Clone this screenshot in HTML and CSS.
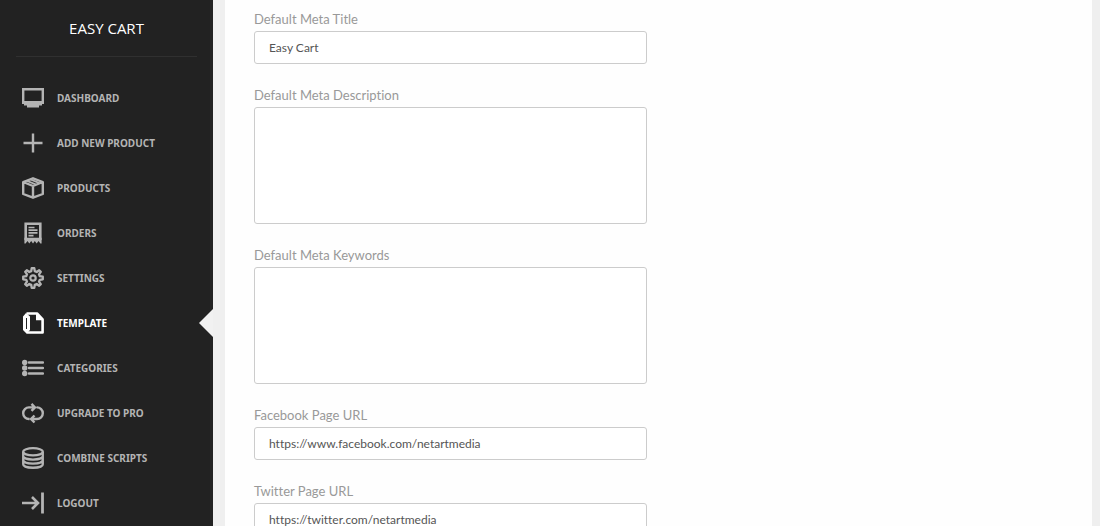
FILE: index.html
```html
<!DOCTYPE html>
<html lang="en">
<head>
  <meta charset="UTF-8">
  <meta name="viewport" content="width=device-width, initial-scale=1.0">
  <title>Easy Cart</title>
  <link rel="stylesheet" href="styles.css">
</head>
<body>
  <div class="wrapper">
    <aside class="sidebar">
      <div class="logo"><a href="#">EASY CART</a></div>
      <nav class="menu">
        <a class="menu-item" href="#">
          <svg class="icon" viewBox="0 0 22 22"><path fill="none" stroke="currentColor" stroke-width="2.400" d="M1.200 2.200h19.600v13H1.200z"/><path fill="currentColor" d="M0 14h22v3H0zM2 17h18v1.500H2zM5 18h12v2.500H5z"/></svg>
          <span>DASHBOARD</span>
        </a>
        <a class="menu-item" href="#">
          <svg class="icon" viewBox="0 0 22 22"><path fill="none" stroke="currentColor" stroke-width="2.400" d="M11 1.500v19M1.500 11h19"/></svg>
          <span>ADD NEW PRODUCT</span>
        </a>
        <a class="menu-item" href="#">
          <svg class="icon" viewBox="0 0 22 22"><path fill="none" stroke="currentColor" stroke-width="2.400" stroke-linejoin="round" d="M11 1.300L20.800 5v12L11 20.700 1.200 17V5zM1.200 5L11 9l9.800-4M11 9v12"/><path fill="none" stroke="currentColor" stroke-width="1.800" d="M5 3.800l9 3.700M8.500 2.500l9 3.700"/></svg>
          <span>PRODUCTS</span>
        </a>
        <a class="menu-item" href="#">
          <svg class="icon" viewBox="0 0 22 22"><path fill="none" stroke="currentColor" stroke-width="2.600" d="M3.700 18V1.700h14.600V18"/><path fill="currentColor" d="M2.400 15.800h17.200v5.700h-1.200L16.500 19l-1.800 2.500L12.800 19 11 21.500 9.200 19l-1.900 2.500L5.500 19l-1.900 2.500H2.400z"/><path stroke="currentColor" stroke-width="1.700" d="M6.500 5.500h6M6.500 8.200h9M6.500 10.900h9M6.500 13.600h5"/></svg>
          <span>ORDERS</span>
        </a>
        <a class="menu-item" href="#">
          <svg class="icon" viewBox="0 0 22 22"><path fill="none" stroke="currentColor" stroke-width="2.300" stroke-linejoin="round" d="M9.700 1.200h2.600l.5 3 1.900.8 2.500-1.800 1.600 1.600L17 7.300l.8 1.900 3 .5v2.600l-3 .5-.8 1.900 1.800 2.500-1.600 1.600-2.500-1.800-1.900.8-.5 3H9.700l-.5-3-1.900-.8-2.500 1.800-1.600-1.600L5 14.700l-.8-1.900-3-.5V9.700l3-.5L5 7.300 3.200 4.800l1.600-1.600L7.300 5l1.900-.8z"/><circle cx="11" cy="11" r="2.700" fill="none" stroke="currentColor" stroke-width="2.200"/></svg>
          <span>SETTINGS</span>
        </a>
        <a class="menu-item active" href="#">
          <svg class="icon" viewBox="0 0 22 22"><path fill="none" stroke="currentColor" stroke-width="2.600" stroke-linejoin="round" d="M4.500 1.500H15l5.600 6v13H4.500"/><path fill="currentColor" d="M14 1.500l6.600 6.800H14zM1 4.500L4 1l4 3.500V18l-3.500 3.500L1 18z"/><path stroke="#222" stroke-width="1" d="M4.500 6v11"/></svg>
          <span>TEMPLATE</span>
        </a>
        <a class="menu-item" href="#">
          <svg class="icon" viewBox="0 0 22 22"><path stroke="currentColor" stroke-width="2.400" stroke-linecap="round" d="M7 5.500h14M7 11h14M7 16.500h14"/><g fill="currentColor"><circle cx="2.700" cy="5.500" r="2.700"/><circle cx="2.700" cy="11" r="2.700"/><circle cx="2.700" cy="16.500" r="2.700"/></g></svg>
          <span>CATEGORIES</span>
        </a>
        <a class="menu-item" href="#">
          <svg class="icon" viewBox="0 0 22 22"><path fill="none" stroke="currentColor" stroke-width="2.400" d="M7.500 17H7A5.800 5.800 0 0 1 7 5.400h5.500M14.500 5.400h.5A5.800 5.800 0 0 1 15 17h-5.500M9.500 1.900L13 5.400 9.500 8.900M12.500 13.500L9 17l3.500 3.500"/></svg>
          <span>UPGRADE TO PRO</span>
        </a>
        <a class="menu-item" href="#">
          <svg class="icon" viewBox="0 0 22 22"><g fill="none" stroke="currentColor" stroke-width="2.300"><ellipse cx="11" cy="4.800" rx="9.800" ry="3.600"/><path d="M1.200 5v12.200c0 4.700 19.600 4.700 19.600 0V5M1.200 9c0 4.700 19.600 4.700 19.600 0M1.200 13.100c0 4.700 19.600 4.700 19.600 0"/></g></svg>
          <span>COMBINE SCRIPTS</span>
        </a>
        <a class="menu-item" href="#">
          <svg class="icon" viewBox="0 0 22 22"><path fill="none" stroke="currentColor" stroke-width="2.600" d="M0 11h15.500M10 5l6 6-6 6"/><path stroke="currentColor" stroke-width="2.800" d="M20.500 .5v21"/></svg>
          <span>LOGOUT</span>
        </a>
      </nav>
    </aside>

    <main class="main">
      <form class="content">
        <div class="fields">
          <div class="form-group">
            <label for="title">Default Meta Title</label>
            <input type="text" class="form-control" id="title" value="Easy Cart">
          </div>
          <div class="form-group">
            <label for="description">Default Meta Description</label>
            <textarea class="form-control" id="description"></textarea>
          </div>
          <div class="form-group">
            <label for="keywords">Default Meta Keywords</label>
            <textarea class="form-control" id="keywords"></textarea>
          </div>
          <div class="form-group">
            <label for="facebook">Facebook Page URL</label>
            <input type="text" class="form-control" id="facebook" value="https://www.facebook.com/netartmedia">
          </div>
          <div class="form-group">
            <label for="twitter">Twitter Page URL</label>
            <input type="text" class="form-control" id="twitter" value="https://twitter.com/netartmedia">
          </div>
        </div>
      </form>
    </main>
  </div>
</body>
</html>
```

FILE: styles.css
```css
* {
  box-sizing: border-box;
}

body {
  margin: 0;
  background-color: #efefef;
  font-family: Lato, sans-serif;
  font-variant-ligatures: none;
}

.wrapper {
  display: flex;
  height: 100vh;
  overflow: hidden;
}

/* sidebar */
.sidebar {
  flex: 0 0 213px;
  background-color: #222;
  font-family: "Noto Sans", sans-serif;
}
.logo {
  margin: 0 16px;
  padding: 16px 0;
  border-bottom: 1px solid #303030;
  text-align: center;
  font-family: "Open Sans", sans-serif;
  font-size: 15px;
  font-weight: 500;
  line-height: 24px;
}
.logo a {
  color: #fff;
  text-decoration: none;
}
.menu {
  padding-top: 18px;
}
.menu-item {
  display: flex;
  align-items: center;
  gap: 13px;
  height: 45px;
  padding-left: 22px;
  color: #b4b4b4;
  font-size: 10px;
  font-weight: bold;
  text-decoration: none;
}
.menu-item:hover,
.menu-item.active {
  color: #fff;
}
.menu-item.active::after {
  content: "";
  margin-left: auto;
  border: 14px solid transparent;
  border-left: 0;
  border-right-color: #f1f1f1;
}
.icon {
  width: 22px;
  height: 22px;
}

/* settings form */
.main {
  flex: 1;
  padding: 0 8px 0 12px;
  overflow-y: auto;
  scrollbar-width: none;
}
.content {
  display: grid;
  grid-template-columns: 1fr 1fr;
  gap: 23px;
  padding: 9px 29px;
  background-color: #fefefe;
}
.form-group {
  display: flex;
  flex-direction: column;
  gap: 2px;
  margin-bottom: 21px;
}
.form-group label {
  color: #999;
  font-size: 13px;
  line-height: 20px;
}
.form-control {
  height: 33px;
  padding: 0 14px;
  background-color: #fff;
  border: 1px solid #ccc;
  border-radius: 3px;
  color: #555;
  font-family: inherit;
  font-size: 12px;
  font-variant-ligatures: none;
}
textarea.form-control {
  height: 117px;
  padding: 8px 14px;
  resize: none;
}
```
